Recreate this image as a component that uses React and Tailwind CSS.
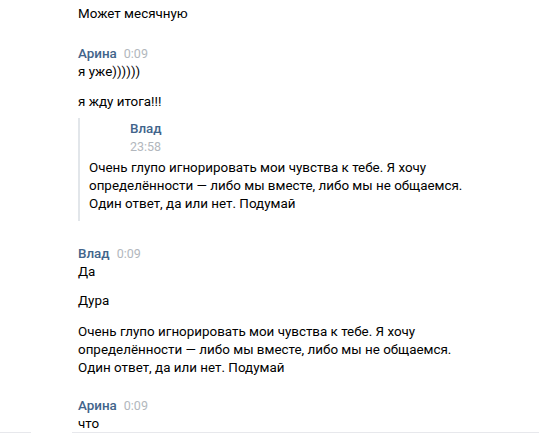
export default function App() {
  const font = { fontFamily: 'Roboto, "Liberation Sans", Arial, sans-serif' };
  return (
    <div className="w-[539px] h-[435px] bg-white overflow-hidden relative text-[13.4px] leading-[18px] text-black" style={font}>
      <div className="pl-[78px] pt-[5px]">
        <div>Может месячную</div>

        <div className="mt-[22px] flex items-baseline gap-[7px]">
          <span className="font-medium text-[#42648b]">Арина</span>
          <span className="text-[#b2b7bd] text-[12.5px]">0:09</span>
        </div>
        <div>я уже))))))</div>
        <div className="mt-[12px]">я жду итога!!!</div>

        <div className="mt-[7px] border-l-2 border-[#e2e6ea] pl-[9px] pb-[8px]">
          <div className="pl-[41px] pt-[2px] font-medium text-[#42648b]">Влад</div>
          <div className="pl-[41px] text-[#b2b7bd] text-[12.5px]">23:58</div>
          <div className="mt-[3px]">Очень глупо игнорировать мои чувства к тебе. Я хочу<br />определённости — либо мы вместе, либо мы не общаемся.<br />Один ответ, да или нет. Подумай</div>
        </div>

        <div className="mt-[24px] flex items-baseline gap-[7px]">
          <span className="font-medium text-[#42648b]">Влад</span>
          <span className="text-[#b2b7bd] text-[12.5px]">0:09</span>
        </div>
        <div>Да</div>
        <div className="mt-[11px]">Дура</div>
        <div className="mt-[13px]">Очень глупо игнорировать мои чувства к тебе. Я хочу<br />определённости — либо мы вместе, либо мы не общаемся.<br />Один ответ, да или нет. Подумай</div>

        <div className="mt-[20px] flex items-baseline gap-[7px]">
          <span className="font-medium text-[#42648b]">Арина</span>
          <span className="text-[#b2b7bd] text-[12.5px]">0:09</span>
        </div>
        <div>что</div>
      </div>
      <div className="flex -mt-[1px]">
        <div className="w-[31px] h-px bg-[#e7e8ec]" />
        <div className="w-[41px]" />
        <div className="flex-1 h-px bg-[#e7e8ec]" />
      </div>
    </div>
  );
}
